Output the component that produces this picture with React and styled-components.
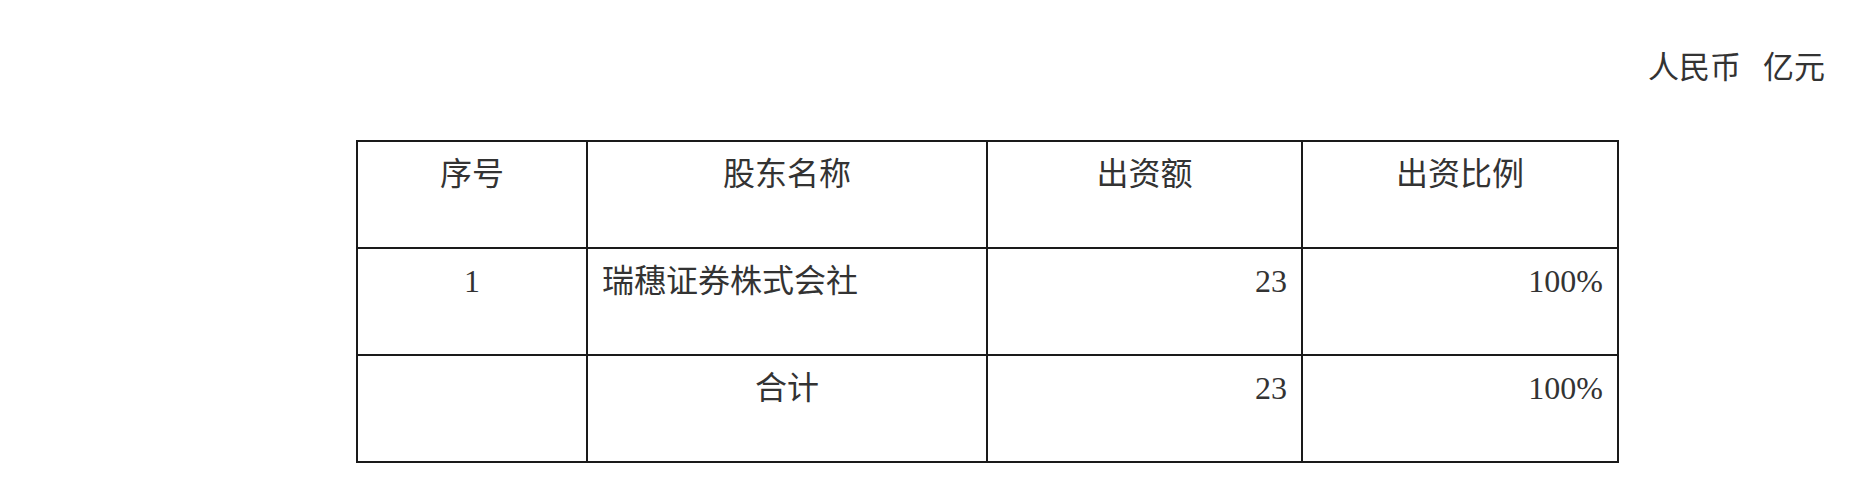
import React from "react";
import styled, { createGlobalStyle } from "styled-components";

const GlobalStyle = createGlobalStyle`
  html, body {
    margin: 0;
    padding: 0;
    background: #ffffff;
  }
  body {
    font-family: "Liberation Serif", "Noto Sans CJK SC", serif;
    color: #333333;
  }
`;

const Page = styled.div`
  width: 1852px;
  height: 478px;
  box-sizing: border-box;
  padding: 45px 27px 0 356px;
  background: #ffffff;
`;

const Unit = styled.div`
  display: flex;
  justify-content: flex-end;
  gap: 22px;
  font-family: "Noto Sans CJK SC", sans-serif;
  font-size: 31px;
  line-height: 40px;
  color: #333333;
`;

const Table = styled.table`
  margin-top: 55px;
  border-collapse: collapse;
  table-layout: fixed;
  width: 1261px;
`;

const Row = styled.tr`
  height: 107px;
`;

const Cell = styled.td`
  border: 2px solid #1a1a1a;
  vertical-align: top;
  padding: 8px 14px 0 14px;
  font-size: 32px;
  line-height: 48px;
  text-align: ${(p) => p.$align || "center"};
  color: #333333;
  white-space: nowrap;
  overflow: hidden;
`;

const rows = [
  { no: "1", name: "瑞穗证券株式会社", nameAlign: "left", amount: "23", ratio: "100%" },
  { no: "", name: "合计", nameAlign: "center", amount: "23", ratio: "100%" },
];

export default function App() {
  return (
    <>
      <GlobalStyle />
      <Page>
        <Unit>
          <span>人民币</span>
          <span>亿元</span>
        </Unit>
        <Table>
          <colgroup>
            <col style={{ width: 230 }} />
            <col style={{ width: 400 }} />
            <col style={{ width: 315 }} />
            <col style={{ width: 316 }} />
          </colgroup>
          <tbody>
            <Row>
              <Cell>序号</Cell>
              <Cell>股东名称</Cell>
              <Cell>出资额</Cell>
              <Cell>出资比例</Cell>
            </Row>
            {rows.map((r, i) => (
              <Row key={i}>
                <Cell>{r.no}</Cell>
                <Cell $align={r.nameAlign}>{r.name}</Cell>
                <Cell $align="right">{r.amount}</Cell>
                <Cell $align="right">{r.ratio}</Cell>
              </Row>
            ))}
          </tbody>
        </Table>
      </Page>
    </>
  );
}
